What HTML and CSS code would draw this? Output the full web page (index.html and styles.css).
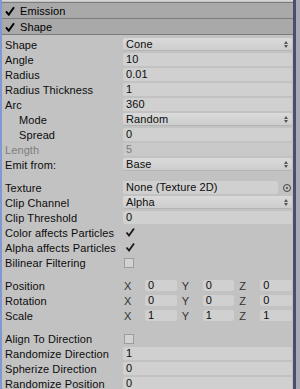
FILE: index.html
```html
<!DOCTYPE html>
<html lang="en">
<head>
  <meta charset="UTF-8">
  <title>Shape Module</title>
  <link rel="stylesheet" href="styles.css">
</head>
<body>
  <div class="window">
    <div class="edge-left"></div>

    <div class="panel">
      <div class="module">
        <svg class="tick" viewBox="0 0 10 10"><path d="M1 5.5 L3.8 8.6 L9 1.2" /></svg>
        <span>Emission</span>
      </div>
      <div class="module">
        <svg class="tick" viewBox="0 0 10 10"><path d="M1 5.5 L3.8 8.6 L9 1.2" /></svg>
        <span>Shape</span>
      </div>

      <div class="props">
        <div class="row">
          <div class="label">Shape</div>
          <div class="field popup">Cone<span class="arrows"></span></div>
        </div>
        <div class="row">
          <div class="label">Angle</div>
          <div class="field">10</div>
        </div>
        <div class="row">
          <div class="label">Radius</div>
          <div class="field">0.01</div>
        </div>
        <div class="row">
          <div class="label">Radius Thickness</div>
          <div class="field">1</div>
        </div>
        <div class="row">
          <div class="label">Arc</div>
          <div class="field">360</div>
        </div>
        <div class="row">
          <div class="label indent">Mode</div>
          <div class="field popup">Random<span class="arrows"></span></div>
        </div>
        <div class="row">
          <div class="label indent">Spread</div>
          <div class="field">0</div>
        </div>
        <div class="row disabled">
          <div class="label">Length</div>
          <div class="field">5</div>
        </div>
        <div class="row">
          <div class="label">Emit from:</div>
          <div class="field popup">Base<span class="arrows"></span></div>
        </div>

        <div class="spacer"></div>

        <div class="row">
          <div class="label">Texture</div>
          <div class="field object">None (Texture 2D)</div>
          <span class="picker"></span>
        </div>
        <div class="row">
          <div class="label">Clip Channel</div>
          <div class="field popup">Alpha<span class="arrows"></span></div>
        </div>
        <div class="row">
          <div class="label">Clip Threshold</div>
          <div class="field">0</div>
        </div>
        <div class="row">
          <div class="label">Color affects Particles</div>
          <div class="check on"><svg viewBox="0 0 10 10"><path d="M1.5 5.5 L4 8.5 L9 1.5" /></svg></div>
        </div>
        <div class="row">
          <div class="label">Alpha affects Particles</div>
          <div class="check on"><svg viewBox="0 0 10 10"><path d="M1.5 5.5 L4 8.5 L9 1.5" /></svg></div>
        </div>
        <div class="row">
          <div class="label">Bilinear Filtering</div>
          <div class="check"></div>
        </div>

        <div class="spacer"></div>

        <div class="row">
          <div class="label">Position</div>
          <div class="vec">
            <div class="axis"><span>X</span><div class="field">0</div></div>
            <div class="axis"><span>Y</span><div class="field">0</div></div>
            <div class="axis"><span>Z</span><div class="field">0</div></div>
          </div>
        </div>
        <div class="row">
          <div class="label">Rotation</div>
          <div class="vec">
            <div class="axis"><span>X</span><div class="field">0</div></div>
            <div class="axis"><span>Y</span><div class="field">0</div></div>
            <div class="axis"><span>Z</span><div class="field">0</div></div>
          </div>
        </div>
        <div class="row">
          <div class="label">Scale</div>
          <div class="vec">
            <div class="axis"><span>X</span><div class="field">1</div></div>
            <div class="axis"><span>Y</span><div class="field">1</div></div>
            <div class="axis"><span>Z</span><div class="field">1</div></div>
          </div>
        </div>

        <div class="spacer"></div>

        <div class="row">
          <div class="label">Align To Direction</div>
          <div class="check"></div>
        </div>
        <div class="row">
          <div class="label">Randomize Direction</div>
          <div class="field">1</div>
        </div>
        <div class="row">
          <div class="label">Spherize Direction</div>
          <div class="field">0</div>
        </div>
        <div class="row">
          <div class="label">Randomize Position</div>
          <div class="field">0</div>
        </div>
      </div>
    </div>

    <div class="edge-right"></div>
  </div>
</body>
</html>
```

FILE: styles.css
```css
body {
  margin: 0;
  background: #c2c2c2;
  font-family: 'Liberation Sans', Arial, sans-serif;
  font-size: 11px;
  letter-spacing: 0.1px;
  color: #0c0c0c;
  overflow: hidden;
}

.window {
  display: flex;
  height: 389px;
}

.edge-left {
  width: 2px;
  background: #8198d2;
}

.edge-right {
  width: 3px;
  background: #4b4d6e;
  border-right: 4px solid #a9a9b8;
}

.panel {
  flex: 1;
  padding-top: 1px;
  border-top: 1px solid #d6d6d6;
}

.module {
  display: flex;
  align-items: center;
  height: 15px;
  background: #a9a9a9;
  border-top: 1px solid #7c7c7c;
  font-size: 11px;
  color: #000;
}

.module + .module {
  border-bottom: 1px solid #7c7c7c;
}

.tick {
  width: 10px;
  height: 10px;
  margin: 0 5px 0 3px;
}

.tick path {
  fill: none;
  stroke: #000;
  stroke-width: 2;
}

.props {
  padding: 2px 1px 0 3px;
}

.row {
  display: flex;
  align-items: center;
  height: 15px;
}

.label {
  width: 118px;
  flex-shrink: 0;
  white-space: nowrap;
}

.indent {
  padding-left: 14px;
  width: 104px;
}

.field {
  flex: 1;
  height: 13px;
  line-height: 13px;
  padding-left: 3px;
  background: #d0d0d0;
  border-radius: 2px;
  position: relative;
  white-space: nowrap;
}

.popup {
  background: linear-gradient(#dadada, #cdcdcd);
  border-bottom: 1px solid #b4b4b4;
  height: 12px;
  line-height: 13px;
}

.arrows {
  position: absolute;
  right: 3px;
  top: 3px;
  width: 5px;
  height: 7px;
}

.arrows::before,
.arrows::after {
  content: "";
  position: absolute;
  left: 0;
  border-left: 2.5px solid transparent;
  border-right: 2.5px solid transparent;
}

.arrows::before {
  top: 0;
  border-bottom: 3px solid #555;
}

.arrows::after {
  bottom: 0;
  border-top: 3px solid #555;
}

.object {
  flex: none;
  width: 152px;
}

.picker {
  width: 6px;
  height: 6px;
  margin-left: 5px;
  border: 1px solid #444;
  border-radius: 50%;
  position: relative;
}

.picker::after {
  content: "";
  position: absolute;
  left: 2px;
  top: 2px;
  width: 2px;
  height: 2px;
  background: #444;
  border-radius: 50%;
}

.disabled {
  color: #7d7d7d;
}

.disabled .field {
  background: #c9c9c9;
}

.spacer {
  height: 8px;
}

.check {
  width: 8px;
  height: 8px;
  margin-left: 1px;
  border: 1px solid #9c9c9c;
  background: #d2d2d2;
  position: relative;
}

.check svg {
  position: absolute;
  left: 0;
  top: -2px;
  width: 10px;
  height: 10px;
}

.check path {
  fill: none;
  stroke: #1a1a1a;
  stroke-width: 1.8;
}

.check.on {
  border-color: transparent;
  background: transparent;
}

.vec {
  flex: 1;
  display: flex;
  gap: 4px;
}

.axis {
  flex: 1;
  display: flex;
  align-items: center;
}

.axis span {
  width: 21px;
  padding-left: 1px;
  color: #333;
}

.axis .field {
  height: 11px;
  line-height: 11px;
}
```
